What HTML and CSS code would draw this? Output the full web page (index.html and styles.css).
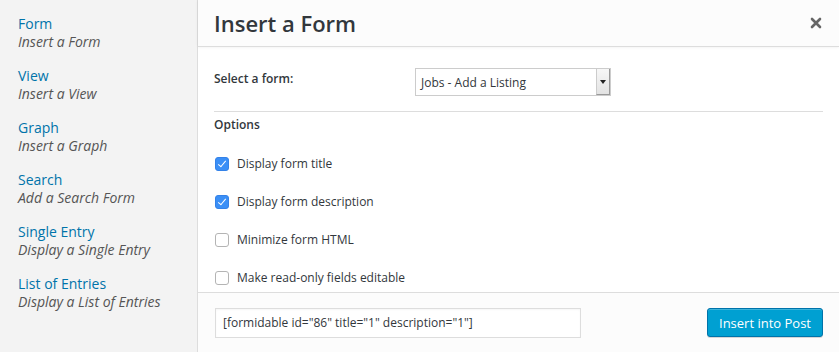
FILE: index.html
```html
<!DOCTYPE html>
<html lang="en">
<head>
  <meta charset="UTF-8" />
  <title>Insert a Form</title>
  <link rel="stylesheet" href="styles.css">
</head>
<body>
  <div class="modal">
    <aside class="sidebar">
      <a class="menu-item" href="#">
        <span class="menu-title">Form</span>
        <span class="menu-desc">Insert a Form</span>
      </a>
      <a class="menu-item" href="#">
        <span class="menu-title">View</span>
        <span class="menu-desc">Insert a View</span>
      </a>
      <a class="menu-item" href="#">
        <span class="menu-title">Graph</span>
        <span class="menu-desc">Insert a Graph</span>
      </a>
      <a class="menu-item" href="#">
        <span class="menu-title">Search</span>
        <span class="menu-desc">Add a Search Form</span>
      </a>
      <a class="menu-item" href="#">
        <span class="menu-title">Single Entry</span>
        <span class="menu-desc">Display a Single Entry</span>
      </a>
      <a class="menu-item" href="#">
        <span class="menu-title">List of Entries</span>
        <span class="menu-desc">Display a List of Entries</span>
      </a>
    </aside>

    <main class="panel">
      <header class="panel-header">
        <h1>Insert a Form</h1>
        <button class="close" aria-label="Close">
          <svg width="12" height="12" viewBox="0 0 12 12"><path d="M2 2 L10 10 M10 2 L2 10" stroke="#666" stroke-width="2.6" stroke-linecap="round"/></svg>
        </button>
      </header>

      <div class="panel-body">
        <div class="field-row">
          <label class="field-label">Select a form:</label>
          <div class="select">
            <span>Jobs - Add a Listing</span>
            <span class="select-arrow"></span>
          </div>
        </div>

        <h3 class="section-title">Options</h3>

        <label class="check"><span class="box checked"></span>Display form title</label>
        <label class="check"><span class="box checked"></span>Display form description</label>
        <label class="check"><span class="box"></span>Minimize form HTML</label>
        <label class="check"><span class="box"></span>Make read-only fields editable</label>
      </div>

      <footer class="panel-footer">
        <input class="shortcode" type="text" value='[formidable id="86" title="1" description="1"]'>
        <button class="btn-primary">Insert into Post</button>
      </footer>
    </main>
  </div>
</body>
</html>
```

FILE: styles.css
```css
* {
  margin: 0;
  padding: 0;
  box-sizing: border-box;
  font-family: 'Open Sans', sans-serif;
}

body {
  width: 839px;
  height: 352px;
  overflow: hidden;
  background: #fff;
  color: #444;
}

.modal {
  display: flex;
  height: 352px;
}

.sidebar {
  width: 198px;
  flex-shrink: 0;
  background: #f3f3f3;
  border-right: 1px solid #ddd;
  padding: 15px 0 0 18px;
  display: flex;
  flex-direction: column;
  gap: 16px;
}

.menu-item {
  display: flex;
  flex-direction: column;
  text-decoration: none;
  font-size: 14px;
  line-height: 18px;
}

.menu-title {
  color: #0073aa;
}

.menu-desc {
  color: #555;
  font-style: italic;
}

.panel {
  flex: 1;
  display: flex;
  flex-direction: column;
  min-width: 0;
}

.panel-header {
  height: 47px;
  flex-shrink: 0;
  background: #fcfcfc;
  border-bottom: 1px solid #ddd;
  box-shadow: 0 0 3px rgba(0, 0, 0, 0.08);
  display: flex;
  align-items: center;
  justify-content: space-between;
  padding: 0 16px 0 16px;
}

.panel-header h1 {
  font-size: 22px;
  font-weight: 600;
  color: #32373c;
  line-height: 28px;
  padding-bottom: 1px;
}

.close {
  background: none;
  border: none;
  width: 20px;
  height: 20px;
  display: flex;
  align-items: center;
  justify-content: center;
  margin-right: -3px;
}

.panel-body {
  flex: 1;
  overflow: hidden;
  padding: 21px 16px 0 16px;
  font-size: 12px;
  color: #32373c;
}

.field-row {
  display: flex;
  align-items: center;
  padding-bottom: 15px;
  border-bottom: 1px solid #ddd;
}

.field-label {
  width: 201px;
  font-weight: 600;
  line-height: 18px;
  margin-top: -6px;
}

.select {
  width: 196px;
  height: 28px;
  border: 1px solid #ccc;
  background: #fff;
  display: flex;
  align-items: center;
  justify-content: space-between;
  padding-left: 5px;
  font-size: 12px;
  color: #32373c;
}

.select-arrow {
  width: 14px;
  height: 26px;
  background: linear-gradient(#f7f7f7, #e3e3e3);
  border-left: 1px solid #ccc;
  border-right: 1px solid #999;
  border-bottom: 1px solid #999;
  position: relative;
}

.select-arrow::after {
  content: "";
  position: absolute;
  left: 3px;
  top: 11px;
  border-left: 3.5px solid transparent;
  border-right: 3.5px solid transparent;
  border-top: 4px solid #222;
}

.section-title {
  font-size: 12px;
  font-weight: 600;
  line-height: 18px;
  margin: 4px 0 11px 0;
}

.check {
  display: flex;
  align-items: center;
  gap: 8px;
  height: 38px;
  line-height: 18px;
}

.box {
  width: 14px;
  height: 14px;
  border: 1px solid #b4b4b4;
  border-radius: 3px;
  background: #fff;
  margin-left: 1px;
  position: relative;
}

.box.checked {
  background: #3b8ff6;
  border-color: #3482e8;
}

.box.checked::after {
  content: "";
  position: absolute;
  left: 4px;
  top: 1px;
  width: 3px;
  height: 7px;
  border-right: 1.5px solid #fff;
  border-bottom: 1.5px solid #fff;
  transform: rotate(40deg);
}

.panel-footer {
  height: 60px;
  flex-shrink: 0;
  background: #fcfcfc;
  border-top: 1px solid #ddd;
  display: flex;
  align-items: center;
  justify-content: space-between;
  padding: 0 16px 0 17px;
}

.shortcode {
  width: 366px;
  height: 30px;
  border: 1px solid #ddd;
  background: #fff;
  padding: 0 7px;
  font-size: 12px;
  color: #32373c;
  box-shadow: inset 0 1px 2px rgba(0, 0, 0, 0.04);
  outline: none;
}

.btn-primary {
  height: 29px;
  padding: 0 11px;
  background: #00a0d2;
  border: 1px solid #0073aa;
  border-radius: 3px;
  color: #fff;
  font-size: 13px;
  box-shadow: inset 0 1px 0 rgba(120, 200, 230, 0.5), 0 1px 0 rgba(0, 0, 0, 0.15);
  cursor: pointer;
}
```
